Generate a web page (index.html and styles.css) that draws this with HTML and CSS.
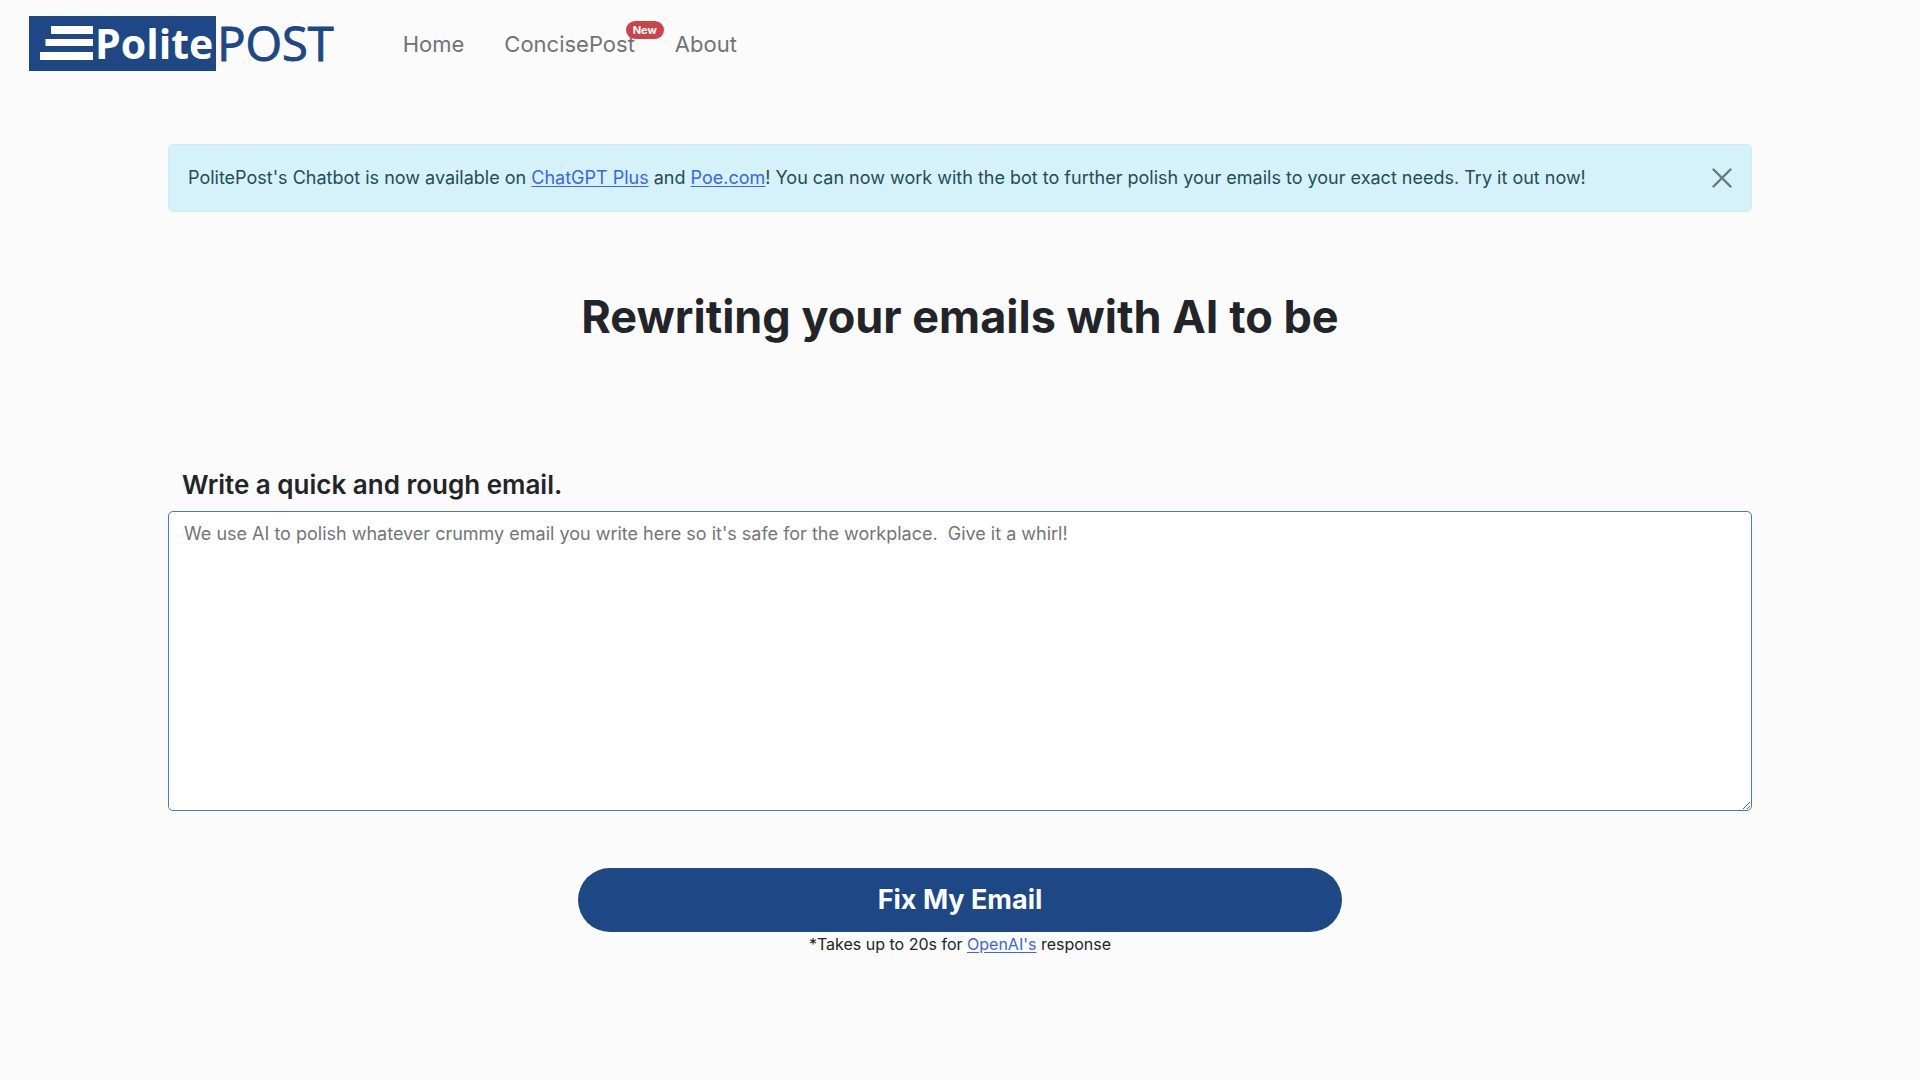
FILE: index.html
```html
<!DOCTYPE html>
<html lang="en">
<head>
<meta charset="utf-8">
<meta name="viewport" content="width=device-width, initial-scale=1">
<title>PolitePost</title>
<link rel="stylesheet" href="styles.css">
</head>
<body>
<header class="navbar">
  <a class="brand" href="#" aria-label="PolitePost">
    <span class="brand-box">
      <svg class="brand-bars" width="54" height="36" viewBox="0 0 54 36" aria-hidden="true">
        <path fill="#fff" d="M12 1h42v8H12zM6.500 14H54v7H6.500zM1 27h53v8H1z"/>
      </svg>
      <span class="brand-polite">Polite</span>
    </span>
    <span class="brand-post">POST</span>
  </a>
  <nav class="nav">
    <a class="nav-link" href="#">Home</a>
    <a class="nav-link" href="#">ConcisePost<span class="badge">New</span></a>
    <a class="nav-link" href="#">About</a>
  </nav>
</header>
<main class="container">
  <div class="alert" role="alert">
    <p class="alert-text">PolitePost's Chatbot is now available on <a href="#">ChatGPT Plus</a> and <a href="#">Poe.com</a>! You can now work with the bot to further polish your emails to your exact needs. Try it out now!</p>
    <button class="close" type="button" aria-label="Close">
      <svg width="20" height="20" viewBox="0 0 20 20" aria-hidden="true"><path d="M1.500 1.500l17 17M18.500 1.500l-17 17" stroke="currentColor" stroke-width="2.400" stroke-linecap="round"/></svg>
    </button>
  </div>
  <h1 class="headline">Rewriting your emails with AI to be</h1>
  <form class="form">
    <label class="label" for="email">Write a quick and rough email.</label>
    <textarea class="email" id="email" placeholder="We use AI to polish whatever crummy email you write here so it's safe for the workplace.&nbsp; Give it a whirl!"></textarea>
    <button class="submit" type="button">Fix My Email</button>
    <p class="note">*Takes up to 20s for <a href="#">OpenAI's</a> response</p>
  </form>
</main>
</body>
</html>
```
FILE: styles.css
```css
* { box-sizing: border-box; }
body {
  margin: 0;
  background: #fbfbfb;
  color: #212529;
  font-family: Inter, "Liberation Sans", sans-serif;
  font-size: 18px;
  line-height: 28px;
}
a { color: #3b66e8; text-underline-offset: 2px; }
.navbar {
  display: flex;
  align-items: center;
  gap: 69px;
  padding: 15px 29px;
}
.brand {
  display: flex;
  align-items: center;
  gap: 1px;
  color: #1d4885;
  font-family: "Open Sans", "Noto Sans", sans-serif;
  line-height: 56px;
  text-decoration: none;
}
.brand-box {
  display: flex;
  align-items: center;
  gap: 2px;
  height: 55px;
  padding: 0 3px 0 10px;
  background: #1d4885;
  color: #fff;
}
.brand-polite { font-size: 41px; font-weight: 700; }
.brand-post { font-size: 47px; -webkit-text-stroke: 1px #1d4885; }
.nav { display: flex; gap: 40px; padding-top: 2px; }
.nav-link {
  position: relative;
  color: #737373;
  font-size: 22px;
  text-decoration: none;
}
.badge {
  position: absolute;
  top: -9px;
  right: -29px;
  padding: 0 7px;
  border-radius: 9px;
  background: #cb444a;
  color: #fff;
  font-size: 11px;
  font-weight: 700;
  line-height: 18px;
}
.container {
  max-width: 1632px;
  margin: 0 auto;
  padding: 58px 24px;
}
.alert {
  display: flex;
  align-items: center;
  justify-content: space-between;
  gap: 24px;
  padding: 19px;
  border: 1px solid #c8edf5;
  border-radius: 5px;
  background: #d5f2fa;
}
.alert-text { margin: 0; color: #234c57; }
.close {
  display: flex;
  padding: 0;
  border: 0;
  background: none;
  color: #69777c;
}
.headline {
  margin: 76px 0 0;
  font-size: 45px;
  font-weight: 700;
  line-height: 58px;
  text-align: center;
}
.form {
  display: flex;
  flex-direction: column;
  align-items: center;
  margin-top: 121px;
}
.label {
  align-self: flex-start;
  padding-left: 14px;
  font-size: 26px;
  font-weight: 600;
  line-height: 36px;
}
.email {
  width: 100%;
  height: 300px;
  margin-top: 8px;
  padding: 8px 15px;
  border: 1px solid #4678d8;
  border-radius: 5px;
  outline: 0;
  background: #fff;
  color: inherit;
  font: inherit;
  resize: vertical;
}
.email::placeholder { color: #737578; opacity: 1; }
.submit {
  width: 764px;
  max-width: 100%;
  margin-top: 57px;
  padding: 14px 24px;
  border: 0;
  border-radius: 32px;
  background: #1d4885;
  color: #fff;
  font: inherit;
  font-size: 27px;
  font-weight: 700;
  line-height: 36px;
}
.note { margin: 0; font-size: 16px; line-height: 24px; }
```
